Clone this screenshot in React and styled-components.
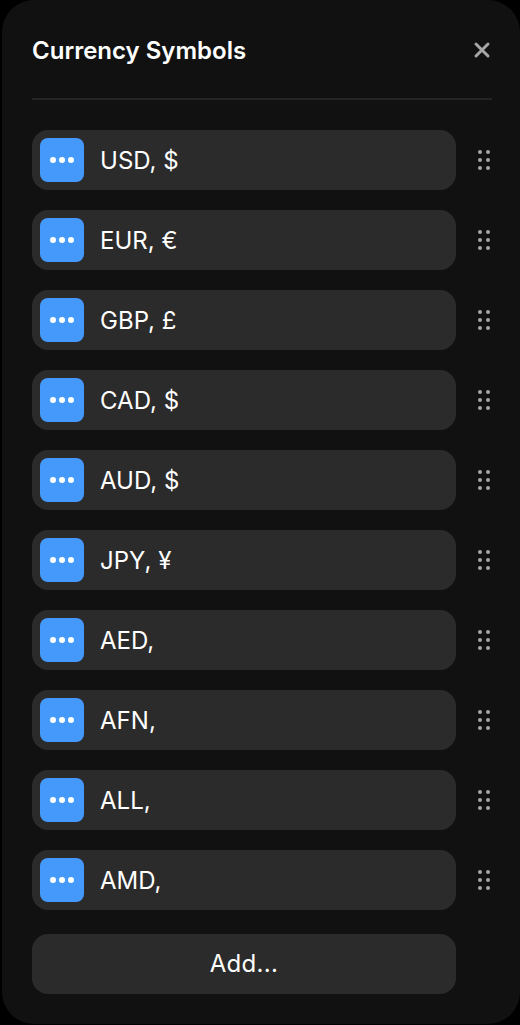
import React from "react";
import styled, { createGlobalStyle } from "styled-components";

const Global = createGlobalStyle`
  * { box-sizing: border-box; }
  body { margin: 0; background: #000; font-family: Inter, "Liberation Sans", sans-serif; }
`;

const Panel = styled.main`
  width: 518px;
  height: 1024px;
  margin-left: 2px;
  padding: 0 28px 0 30px;
  background: #111;
  border-radius: 32px;
  color: #fff;
`;

const Header = styled.header`
  display: flex;
  align-items: center;
  justify-content: space-between;
  height: 100px;
  padding-top: 2px;
  border-bottom: 2px solid #242424;
`;

const Title = styled.h1`
  margin: 0;
  padding-top: 2px;
  font-size: 24px;
  line-height: 32px;
  font-weight: 600;
`;

const CloseButton = styled.button`
  display: flex;
  width: 20px;
  height: 20px;
  padding: 0;
  border: 0;
  background: none;
  color: #a6a6a6;
`;

const List = styled.ul`
  display: flex;
  flex-direction: column;
  gap: 20px;
  margin: 30px 0 24px;
  padding: 0;
  list-style: none;
`;

const Row = styled.li`
  display: flex;
  align-items: center;
  justify-content: space-between;
`;

const Field = styled.div`
  display: flex;
  align-items: center;
  gap: 16px;
  width: 424px;
  height: 60px;
  padding: 8px;
  border-radius: 16px;
  background: #2b2b2b;
  font-size: 24px;
  letter-spacing: 0.03px;
`;

const MoreButton = styled.button`
  display: flex;
  width: 44px;
  height: 44px;
  padding: 0;
  border: 0;
  border-radius: 8px;
  background: #4599fb;
`;

const Handle = styled.span`
  display: flex;
  width: 16px;
  height: 24px;
  color: #a6a6a6;
`;

const AddButton = styled.button`
  display: block;
  width: 424px;
  height: 60px;
  padding: 0 0 2px;
  border: 0;
  border-radius: 16px;
  background: #2b2b2b;
  color: #fff;
  font: 400 24px Inter, "Liberation Sans", sans-serif;
  letter-spacing: 0.3px;
`;

const items = ["USD, $", "EUR, €", "GBP, £", "CAD, $", "AUD, $", "JPY, ¥", "AED,", "AFN,", "ALL,", "AMD,"];

export default function App() {
  return (
    <>
      <Global />
      <Panel>
        <Header>
          <Title>Currency Symbols</Title>
          <CloseButton aria-label="Close">
            <svg width="20" height="20" fill="none" stroke="currentColor" strokeWidth="3" strokeLinecap="round">
              <path d="M4 4L16 16M16 4L4 16" />
            </svg>
          </CloseButton>
        </Header>
        <List>
          {items.map((label) => (
            <Row key={label}>
              <Field>
                <MoreButton aria-label="More">
                  <svg width="44" height="44" fill="#fff">
                    <circle cx="13" cy="22" r="3" />
                    <circle cx="22" cy="22" r="3" />
                    <circle cx="31" cy="22" r="3" />
                  </svg>
                </MoreButton>
                <span>{label}</span>
              </Field>
              <Handle>
                <svg width="16" height="24" fill="currentColor">
                  {[4, 12, 20].map((y) => (
                    <React.Fragment key={y}>
                      <circle cx="4" cy={y} r="2" />
                      <circle cx="12" cy={y} r="2" />
                    </React.Fragment>
                  ))}
                </svg>
              </Handle>
            </Row>
          ))}
        </List>
        <AddButton>Add...</AddButton>
      </Panel>
    </>
  );
}
